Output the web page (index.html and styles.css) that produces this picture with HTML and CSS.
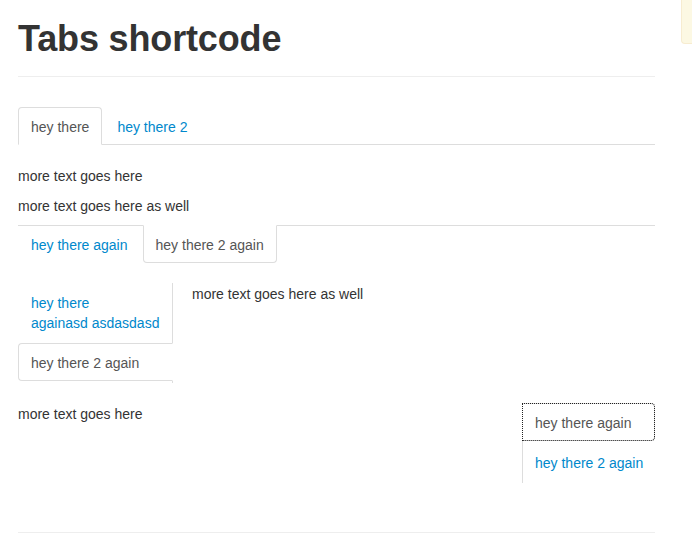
FILE: index.html
```html
<!DOCTYPE html>
<html lang="en">
<head>
<meta charset="utf-8">
<title>Tabs shortcode</title>
<link rel="stylesheet" href="styles.css">
</head>
<body>
<div class="page">
  <div class="page-header">
    <h1>Tabs shortcode</h1>
  </div>

  <div class="tabbable tabs-top">
    <ul class="nav-tabs">
      <li class="active"><a href="#t1">hey there</a></li>
      <li><a href="#t2">hey there 2</a></li>
    </ul>
    <div class="tab-content">
      <p>more text goes here</p>
    </div>
  </div>

  <div class="tabbable tabs-below">
    <div class="tab-content">
      <p>more text goes here as well</p>
    </div>
    <ul class="nav-tabs">
      <li><a href="#t3">hey there again</a></li>
      <li class="active"><a href="#t4">hey there 2 again</a></li>
    </ul>
  </div>

  <div class="tabbable tabs-left">
    <ul class="nav-tabs">
      <li><a href="#t5">hey there<br>againasd asdasdasd</a></li>
      <li class="active"><a href="#t6">hey there 2 again</a></li>
    </ul>
    <div class="tab-content">
      <p>more text goes here as well</p>
    </div>
  </div>

  <div class="tabbable tabs-right">
    <div class="tab-content">
      <p>more text goes here</p>
    </div>
    <ul class="nav-tabs">
      <li class="active"><a class="focused" href="#t7">hey there again</a></li>
      <li><a href="#t8">hey there 2 again</a></li>
    </ul>
  </div>

  <hr class="footer-rule">
</div>
<div class="corner-note"></div>
</body>
</html>
```

FILE: styles.css
```css
html, body {
  margin: 0;
  padding: 0;
  background: #ffffff;
}

body {
  font-family: "Liberation Sans", Arial, Helvetica, sans-serif;
  font-size: 14px;
  line-height: 20px;
  color: #333333;
}

a {
  color: #0088cc;
  text-decoration: none;
}

p {
  margin: 0 0 9px;
  padding-top: 1px;
}

.page {
  width: 637px;
  padding: 19px 0 0 18px;
}

.page-header {
  padding-bottom: 17px;
  border-bottom: 1px solid #eeeeee;
  margin-bottom: 30px;
}

.page-header h1 {
  margin: 0;
  font-size: 36px;
  line-height: 40px;
  font-weight: bold;
  letter-spacing: -0.15px;
  color: #333333;
}

/* generic tabs */
.nav-tabs {
  list-style: none;
  margin: 0;
  padding: 0;
}

.nav-tabs a {
  display: block;
  padding: 9px 12px 7px;
  line-height: 20px;
  border: 1px solid transparent;
  white-space: nowrap;
}

.nav-tabs .active a {
  color: #555555;
  background: #ffffff;
  cursor: default;
}

/* tabs on top */
.tabs-top .nav-tabs {
  display: flex;
  border-bottom: 1px solid #dddddd;
  margin-bottom: 20px;
}

.tabs-top .nav-tabs li {
  margin: 0 2px -1px 0;
}

.tabs-top .nav-tabs a {
  border-radius: 4px 4px 0 0;
}

.tabs-top .nav-tabs .active a {
  border-color: #dddddd #dddddd transparent;
}

/* tabs below */
.tabs-below .nav-tabs {
  display: flex;
  border-top: 1px solid #dddddd;
  margin-bottom: 20px;
}

.tabs-below .nav-tabs li {
  margin: -1px 2px 0 0;
}

.tabs-below .nav-tabs a {
  border-radius: 0 0 4px 4px;
}

.tabs-below .nav-tabs .active a {
  border-color: transparent #dddddd #dddddd #dddddd;
}

/* tabs left */
.tabs-left {
  display: flex;
  align-items: flex-start;
  margin-bottom: 20px;
}

.tabs-left .nav-tabs {
  flex: 0 0 154px;
  width: 154px;
  border-right: 1px solid #dddddd;
  margin-right: 19px;
}

.tabs-left .nav-tabs a {
  margin-right: -1px;
  margin-bottom: 2px;
  border-radius: 4px 0 0 4px;
}

.tabs-left .nav-tabs .active a {
  border-color: #dddddd transparent #dddddd #dddddd;
}

.tabs-left .tab-content {
  flex: 1;
}

/* tabs right */
.tabs-right {
  display: flex;
  align-items: flex-start;
}

.tabs-right .tab-content {
  flex: 1;
}

.tabs-right .nav-tabs {
  flex: 0 0 132px;
  width: 132px;
  border-left: 1px solid #dddddd;
  margin-left: 19px;
}

.tabs-right .nav-tabs a {
  margin-left: -1px;
  margin-bottom: 2px;
  border-radius: 0 4px 4px 0;
}

.tabs-right .nav-tabs .active a {
  border-color: #dddddd #dddddd #dddddd transparent;
}

.nav-tabs a.focused {
  outline: 1px dotted #222222;
  outline-offset: -1px;
}

.footer-rule {
  margin: 49px 0 0;
  border: 0;
  border-top: 1px solid #eeeeee;
  height: 0;
}

.corner-note {
  position: absolute;
  top: 0;
  right: 0;
  width: 10px;
  height: 43px;
  background: #fcf8e3;
  border-left: 1px solid #f7ecd0;
  border-bottom: 1px solid #f7ecd0;
  border-bottom-left-radius: 4px;
}
```
